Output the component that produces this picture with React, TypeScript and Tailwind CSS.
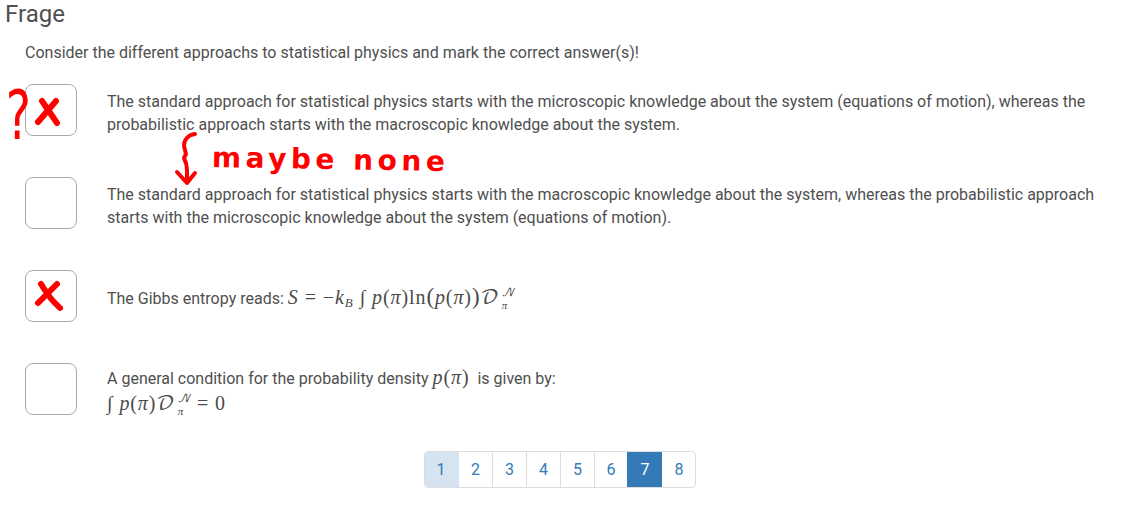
import React from "react";

const M = ({ children }: { children: React.ReactNode }) => (
  <span className="font-['Liberation_Serif',serif] text-[20px] tracking-[0.9px] text-[#4a4a4a]">{children}</span>
);
const I = ({ children }: { children: React.ReactNode }) => <i className="italic">{children}</i>;
const Script = ({ children }: { children: React.ReactNode }) => (
  <span className="font-['DejaVu_Math_TeX_Gyre','DejaVu_Sans',serif]">{children}</span>
);

const SubSup = () => (
  <span className="inline-flex flex-col align-middle -my-[4px] ml-[2px] text-[11px] leading-[13px] italic">
    <span className="font-['DejaVu_Math_TeX_Gyre','DejaVu_Sans',serif]">𝒩</span>
    <span>π</span>
  </span>
);

const Eq = ({ children }: { children: React.ReactNode }) => <span className="mx-[6px]">{children}</span>;

const Box = () => <div className="w-[52px] h-[52px] shrink-0 rounded-lg border border-[#aaaaaa] bg-white" />;

const Row = ({ pad, children }: { pad: string; children: React.ReactNode }) => (
  <div className="flex ml-[25px] h-[52px] mb-[41px]">
    <Box />
    <div className={`ml-[30px] w-[1000px] leading-[23px] ${pad}`}>{children}</div>
  </div>
);

const pages = [
  { n: 1, c: "w-[34px] pr-[2px] bg-[#d6e3f1] rounded-l" },
  { n: 2, c: "w-[34px] border-r border-[#dddddd]" },
  { n: 3, c: "w-[34px] border-r border-[#dddddd]" },
  { n: 4, c: "w-[34px] border-r border-[#dddddd]" },
  { n: 5, c: "w-[34px] border-r border-[#dddddd]" },
  { n: 6, c: "w-[32px]" },
  { n: 7, c: "w-[35px] pl-[1px] bg-[#337ab7] text-white" },
  { n: 8, c: "w-[33px] pl-[1px]" },
];

export default function App() {
  return (
    <div className="relative w-[1130px] h-[507px] overflow-hidden bg-white font-['Roboto',sans-serif] text-[16px] text-[#4f4f4f]">
      <h1 className="pl-[5px] text-[24px] leading-[28px] font-normal">Frage</h1>
      <p className="ml-[25px] mt-[13px] mb-[20px] leading-[23px]">
        Consider the different approachs to statistical physics and mark the correct answer(s)!
      </p>

      <Row pad="pt-[6px]">
        The standard approach for statistical physics starts with the microscopic knowledge about the system (equations of motion), whereas the probabilistic approach starts with the macroscopic knowledge about the system.
      </Row>
      <Row pad="pt-[6px]">
        The standard approach for statistical physics starts with the macroscopic knowledge about the system, whereas the probabilistic approach starts with the microscopic knowledge about the system (equations of motion).
      </Row>
      <Row pad="pt-[15px]">
        The Gibbs entropy reads:{" "}
        <M>
          <I>S</I>
          <Eq>=</Eq>−<I>k</I>
          <sub className="text-[13px]"><I>B</I></sub>
          <span className="ml-[6px] mr-[6px]">∫</span>
          <I>p</I>(<I>π</I>)ln
          <span className="text-[23px] font-light">(</span>
          <I>p</I>(<I>π</I>)
          <span className="text-[23px] font-light">)</span>
          <Script>𝒟</Script>
          <SubSup />
        </M>
      </Row>
      <Row pad="pt-[3px]">
        <div>
          A general condition for the probability density <M><I>p</I>(<I>π</I>)</M> &nbsp;is given by:
        </div>
        <div className="mt-[2px]">
          <M>
            <span className="mr-[6px]">∫</span>
            <I>p</I>(<I>π</I>)<Script>𝒟</Script>
            <SubSup />
            <Eq>=</Eq>0
          </M>
        </div>
      </Row>

      <nav className="flex ml-[424px] -mt-[5px] w-fit h-[37px] rounded border border-[#dddddd] text-[#337ab7] leading-[35px] text-center">
        {pages.map((p) => (
          <span key={p.n} className={p.c}>
            {p.n}
          </span>
        ))}
      </nav>

      {/* Red handwritten annotations lying over the page */}
      <span className="absolute left-[1px] top-[76px] w-[32px] text-center scale-x-[0.7] font-['DejaVu_Sans',sans-serif] text-[68px] leading-[80px] text-[#ff0000]">?</span>
      <span className="absolute left-[212px] top-[143px] rotate-[1deg] font-['DejaVu_Sans',sans-serif] font-bold text-[28px] leading-[34px] tracking-[4.5px] text-[#ff0000] whitespace-nowrap">maybe none</span>
      <svg className="absolute left-0 top-0 pointer-events-none" width={1130} height={507} fill="none" stroke="#ff0000" strokeLinecap="round" strokeLinejoin="round">
        <path strokeWidth={6} d="M42 101 L57 123 M56 101 C50 108 44 115 38 122" />
        <path strokeWidth={6} d="M41 284 C46 292 50 298 54 302 L60 308 M57 284 C51 290 44 297 38 303" />
        <path strokeWidth={4} d="M195 134 C188 135 184 140 184 146 L186 154 L184 158 C186 162 187 166 187 170 L187 182 M177 172 L187 183 L195 173" />
      </svg>
    </div>
  );
}
